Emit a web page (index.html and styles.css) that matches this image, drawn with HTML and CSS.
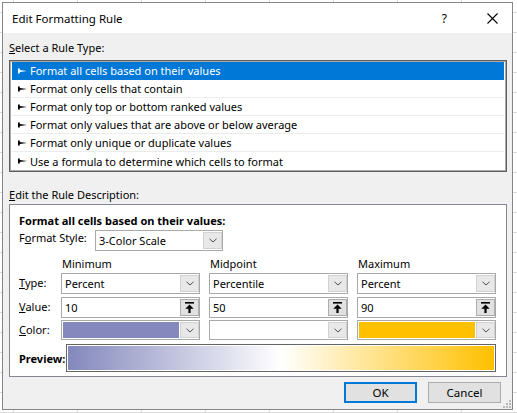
FILE: index.html
```html
<!DOCTYPE html>
<html>
<head>
<meta charset="utf-8">
<link rel="stylesheet" href="styles.css">
</head>
<body>
<div class="dialog">
  <div class="titlebar">
    <span class="title">Edit Formatting Rule</span>
    <span class="help">?</span>
    <span class="close"><svg width="11" height="11" viewBox="0 0 11 11"><path d="M0.5 0.5 L10.5 10.5 M10.5 0.5 L0.5 10.5" stroke="#000" stroke-width="1.1" fill="none"/></svg></span>
  </div>
  <div class="main">
    <div class="section-label"><u>S</u>elect a Rule Type:</div>
    <div class="listbox">
      <div class="item selected"><svg class="arrow" width="9" height="6" viewBox="0 0 9 6"><path d="M0 0.5 H1.8 V2 L9 3 L1.8 4 V5.5 H0 Z" fill="currentColor"/></svg>Format all cells based on their values</div>
      <div class="item"><svg class="arrow" width="9" height="6" viewBox="0 0 9 6"><path d="M0 0.5 H1.8 V2 L9 3 L1.8 4 V5.5 H0 Z" fill="currentColor"/></svg>Format only cells that contain</div>
      <div class="item"><svg class="arrow" width="9" height="6" viewBox="0 0 9 6"><path d="M0 0.5 H1.8 V2 L9 3 L1.8 4 V5.5 H0 Z" fill="currentColor"/></svg>Format only top or bottom ranked values</div>
      <div class="item"><svg class="arrow" width="9" height="6" viewBox="0 0 9 6"><path d="M0 0.5 H1.8 V2 L9 3 L1.8 4 V5.5 H0 Z" fill="currentColor"/></svg>Format only values that are above or below average</div>
      <div class="item"><svg class="arrow" width="9" height="6" viewBox="0 0 9 6"><path d="M0 0.5 H1.8 V2 L9 3 L1.8 4 V5.5 H0 Z" fill="currentColor"/></svg>Format only unique or duplicate values</div>
      <div class="item last"><svg class="arrow" width="9" height="6" viewBox="0 0 9 6"><path d="M0 0.5 H1.8 V2 L9 3 L1.8 4 V5.5 H0 Z" fill="currentColor"/></svg>Use a formula to determine which cells to format</div>
    </div>
    <div class="section-label desc-label"><u>E</u>dit the Rule Description:</div>
    <div class="descbox">
      <div class="desc-title">Format all cells based on their values:</div>
      <div class="style-row">
        <span class="style-lbl">F<u>o</u>rmat Style:</span>
        <div class="combo style-combo"><span class="val">3-Color Scale</span><span class="drop"><svg width="8" height="5" viewBox="0 0 8 5"><path d="M0.5 0.8 L4 4 L7.5 0.8" stroke="#505050" fill="none" stroke-width="1"/></svg></span></div>
      </div>
      <div class="grid">
        <span></span>
        <span class="colhead">Minimum</span>
        <span class="colhead">Midpoint</span>
        <span class="colhead">Maximum</span>

        <span class="lbl"><u>T</u>ype:</span>
        <div class="combo"><span class="val">Percent</span><span class="drop"><svg width="8" height="5" viewBox="0 0 8 5"><path d="M0.5 0.8 L4 4 L7.5 0.8" stroke="#505050" fill="none" stroke-width="1"/></svg></span></div>
        <div class="combo"><span class="val">Percentile</span><span class="drop"><svg width="8" height="5" viewBox="0 0 8 5"><path d="M0.5 0.8 L4 4 L7.5 0.8" stroke="#505050" fill="none" stroke-width="1"/></svg></span></div>
        <div class="combo"><span class="val">Percent</span><span class="drop"><svg width="8" height="5" viewBox="0 0 8 5"><path d="M0.5 0.8 L4 4 L7.5 0.8" stroke="#505050" fill="none" stroke-width="1"/></svg></span></div>

        <span class="lbl"><u>V</u>alue:</span>
        <div class="combo input"><span class="val">10</span><span class="spin"><svg width="9" height="11" viewBox="0 0 9 11"><rect x="0" y="0" width="9" height="1.6" fill="#000"/><path d="M0.3 6.7 L4.5 2.4 L8.7 6.7 Z" fill="#000"/><rect x="3.4" y="6" width="2.2" height="5" fill="#000"/></svg></span></div>
        <div class="combo input"><span class="val">50</span><span class="spin"><svg width="9" height="11" viewBox="0 0 9 11"><rect x="0" y="0" width="9" height="1.6" fill="#000"/><path d="M0.3 6.7 L4.5 2.4 L8.7 6.7 Z" fill="#000"/><rect x="3.4" y="6" width="2.2" height="5" fill="#000"/></svg></span></div>
        <div class="combo input"><span class="val">90</span><span class="spin"><svg width="9" height="11" viewBox="0 0 9 11"><rect x="0" y="0" width="9" height="1.6" fill="#000"/><path d="M0.3 6.7 L4.5 2.4 L8.7 6.7 Z" fill="#000"/><rect x="3.4" y="6" width="2.2" height="5" fill="#000"/></svg></span></div>

        <span class="lbl"><u>C</u>olor:</span>
        <div class="combo color"><span class="swatch swatch-min"></span><span class="drop"><svg width="8" height="5" viewBox="0 0 8 5"><path d="M0.5 0.8 L4 4 L7.5 0.8" stroke="#505050" fill="none" stroke-width="1"/></svg></span></div>
        <div class="combo color"><span class="swatch swatch-mid"></span><span class="drop"><svg width="8" height="5" viewBox="0 0 8 5"><path d="M0.5 0.8 L4 4 L7.5 0.8" stroke="#505050" fill="none" stroke-width="1"/></svg></span></div>
        <div class="combo color"><span class="swatch swatch-max"></span><span class="drop"><svg width="8" height="5" viewBox="0 0 8 5"><path d="M0.5 0.8 L4 4 L7.5 0.8" stroke="#505050" fill="none" stroke-width="1"/></svg></span></div>
      </div>
      <div class="preview-row">
        <span class="preview-lbl">Preview:</span>
        <div class="preview"><div class="grad"></div></div>
      </div>
    </div>
    <div class="buttons">
      <button class="btn ok">OK</button>
      <button class="btn">Cancel</button>
    </div>
  </div>
  <svg class="grip" width="8" height="8" viewBox="0 0 8 8"><g fill="#b8b8b8"><rect x="6" y="0" width="2" height="2"/><rect x="3" y="3" width="2" height="2"/><rect x="6" y="3" width="2" height="2"/><rect x="0" y="6" width="2" height="2"/><rect x="3" y="6" width="2" height="2"/><rect x="6" y="6" width="2" height="2"/></g></svg>
</div>
</body>
</html>
```
FILE: styles.css
```css
* { box-sizing: border-box; }
html, body { margin: 0; padding: 0; }
body {
  width: 517px;
  height: 413px;
  overflow: hidden;
  background-color: #ffffff;
  background-image:
    repeating-linear-gradient(to right, transparent 0, transparent 13px, #dadada 13px, #dadada 14px, transparent 14px, transparent 64px),
    repeating-linear-gradient(to bottom, transparent 0, transparent 12px, #dadada 12px, #dadada 13px, transparent 13px, transparent 20px);
  font-family: "Segoe UI", "Noto Sans", sans-serif;
  font-size: 11px;
  color: #000;
}
.dialog {
  position: relative;
  margin: 2px 0 0 2px;
  width: 511px;
  height: 408px;
  border: 1px solid #868686;
  background: #f0f0f0;
  display: flex;
  flex-direction: column;
}
.titlebar {
  height: 30px;
  background: #fff;
  display: flex;
  align-items: center;
  padding-left: 9px;
}
.title { flex: 1; font-size: 11.5px; }
.help { margin-right: 40px; font-size: 12px; }
.close { width: 11px; height: 11px; margin-right: 14px; display: flex; }
.main { padding: 0 5px 0 6px; display: flex; flex-direction: column; }
.section-label { height: 16px; line-height: 16px; margin-top: 7px; }
.listbox {
  margin-top: 4px;
  height: 112px;
  background: #fff;
  border: 1px solid #5f5f5f;
  box-shadow: inset 0 0 0 1px #a9a9a9;
  padding: 1px 2px;
}
.item {
  height: 18px;
  line-height: 17px;
  padding-left: 6px;
  display: flex;
  align-items: center;
  border-bottom: 1px solid #ececec;
  white-space: nowrap;
  overflow: hidden;
}
.item.last { border-bottom: none; }
.item.selected { background: #0078d7; color: #fff; border-bottom-color: #0078d7; }
.arrow { margin-right: 3px; flex: none; }
.desc-label { margin-top: 15px; }
.descbox {
  margin-top: 1px;
  height: 173px;
  background: #fff;
  border: 1px solid #828790;
  padding: 8px 0 4px 9px;
}
.desc-title { font-weight: bold; height: 16px; line-height: 16px; }
.style-row { display: flex; margin-top: 1px; height: 21px; }
.style-lbl { width: 76px; line-height: 16px; }
.combo {
  height: 21px;
  border: 1px solid #a9a9a9;
  background: #fff;
  display: flex;
  align-items: stretch;
}
.style-combo { width: 128px; }
.val { flex: 1; padding-left: 3px; line-height: 19px; white-space: nowrap; }
.drop, .spin {
  width: 19px;
  margin: 1px 0 1px 0;
  background: #e8e8e8;
  border: 1px solid #d2d2d2;
  display: flex;
  align-items: center;
  justify-content: center;
}
.spin { background: #e1e1e1; border-color: #adadad; }
.grid {
  margin-top: 4px;
  display: grid;
  grid-template-columns: 33px 139px 139px 139px;
  column-gap: 9px;
  grid-template-rows: 18px 24px 23px 20px;
  align-items: start;
}
.colhead { line-height: 18px; padding-left: 1px; }
.lbl { line-height: 20px; }
.combo.color { height: 20px; }
.swatch { flex: 1; margin: 1px; }
.swatch-min { background: #8488bd; }
.swatch-mid { background: #fff; }
.swatch-max { background: #ffc000; }
.preview-row { display: flex; align-items: center; margin-top: 4px; height: 28px; }
.preview-lbl { width: 47px; flex: none; font-weight: bold; white-space: nowrap; }
.preview {
  width: 430px;
  flex: none;
  height: 28px;
  border: 1px solid #646464;
  padding: 1px;
  background: #fff;
}
.grad {
  height: 100%;
  background: linear-gradient(to right, #8488bd 0%, #ffffff 50%, #ffc000 100%);
}
.buttons {
  display: flex;
  justify-content: flex-end;
  gap: 11px;
  margin-top: 5px;
  padding-right: 6px;
}
.btn {
  width: 73px;
  height: 21px;
  font-family: inherit;
  font-size: 11.5px;
  color: #000;
  background: #e1e1e1;
  border: 1px solid #adadad;
  padding: 0;
}
.btn.ok { border: 2px solid #0078d7; }
.grip { position: absolute; right: 1px; bottom: 1px; }
```
